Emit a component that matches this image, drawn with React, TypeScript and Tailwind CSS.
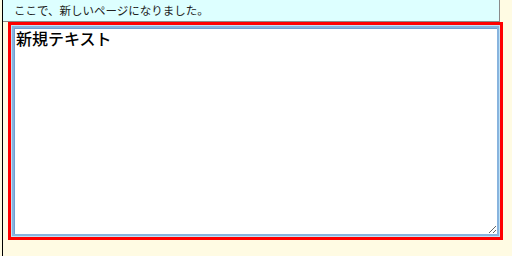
export default function App() {
  return (
    <div className="h-[256px] w-[512px] bg-[#fffbe3] pl-[2px] overflow-hidden" style={{ fontFamily: '"Noto Sans CJK JP", "Noto Sans", sans-serif' }}>
      <div className="h-full border-l border-black">
        {/* header message */}
        <div className="h-[22px] w-[497px] bg-[#ddffff] border-b border-r border-[#8a8a8a] pl-[11px] text-[11.5px] leading-[20px] text-[#222]">
          ここで、新しいページになりました。
        </div>
        <div className="ml-[5px] w-[495px] h-[218px] border-[3px] border-[#ff0000] p-px">
          <textarea
            defaultValue="新規テキスト"
            className="w-full h-full resize border-2 border-[#88b4de] bg-white px-[2px] pt-0 text-[16px] leading-[20px] font-medium text-black outline-none shadow-[0_0_0_1px_#bfe2f6,inset_1px_1px_0_#6f9fd2]"
            style={{ fontFamily: '"Noto Sans CJK JP", sans-serif' }}
          />
        </div>
      </div>
    </div>
  );
}
